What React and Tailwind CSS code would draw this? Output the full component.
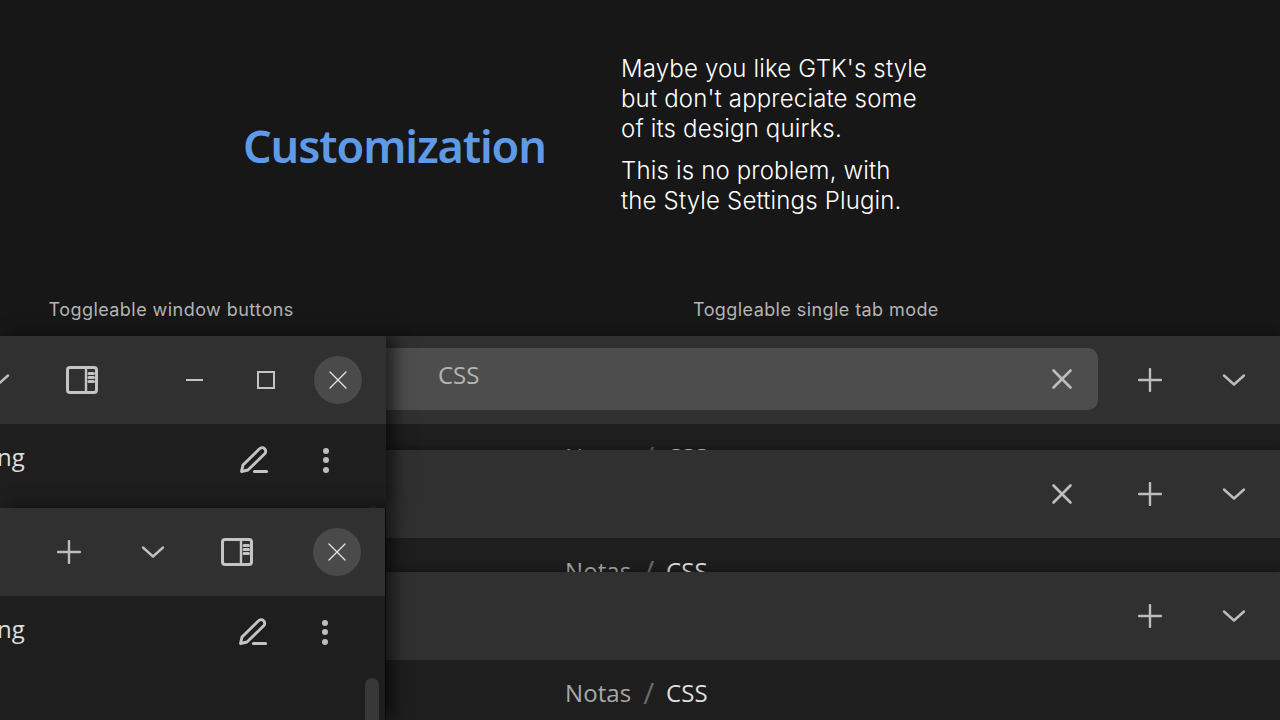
const sansUi = "[font-family:'Open_Sans','Noto_Sans',sans-serif]";

function Plus({ className = "" }) {
  return (
    <svg viewBox="0 0 24 24" className={`h-6 w-6 ${className}`} fill="none" stroke="#bdbdbd" strokeWidth="2.4" strokeLinecap="round">
      <path d="M12 1v22M1 12h22" />
    </svg>
  );
}
function Chevron() {
  return (
    <svg viewBox="0 0 24 24" className="h-6 w-6" fill="none" stroke="#bdbdbd" strokeWidth="2.4" strokeLinecap="round" strokeLinejoin="round">
      <path d="M2 7.5l10 9 10-9" />
    </svg>
  );
}
function Cross() {
  return (
    <svg viewBox="0 0 24 24" className="h-6 w-6" fill="none" stroke="#bdbdbd" strokeWidth="2.6" strokeLinecap="round">
      <path d="M3.5 3.5l17 17M20.5 3.5l-17 17" />
    </svg>
  );
}
function ThinCross() {
  return (
    <svg viewBox="0 0 24 24" className="h-6 w-6" fill="none" stroke="#e0e0e0" strokeWidth="1.4" strokeLinecap="round">
      <path d="M4 4l16 16M20 4L4 20" />
    </svg>
  );
}
function Sidebar() {
  return (
    <svg viewBox="0 0 32 28" className="h-[28px] w-[32px]" fill="none" stroke="#c4c4c4">
      <rect x="1.5" y="1.5" width="29" height="25" rx="2.5" strokeWidth="3" />
      <path d="M20 1v26" strokeWidth="2.4" />
      <path d="M23 7.5h4.5M23 11.5h4.5M23 15.5h4.5" strokeWidth="3" strokeLinecap="round" />
    </svg>
  );
}
function Pencil() {
  return (
    <svg viewBox="0 0 30 28" className="h-[28px] w-[30px]" fill="none" stroke="#c4c4c4" strokeWidth="2.9" strokeLinecap="round" strokeLinejoin="round">
      <path d="M2.5 25.5L4 19 20.5 2.8A3.6 3.6 0 0 1 25.7 7.8L9 24z" />
      <path d="M15.5 25.5h12" strokeWidth="3.2" />
    </svg>
  );
}
function Dots() {
  return (
    <div className="flex flex-col gap-[3.5px]">
      <span className="block h-[6px] w-[6px] rounded-full bg-[#bdbdbd]" />
      <span className="block h-[6px] w-[6px] rounded-full bg-[#bdbdbd]" />
      <span className="block h-[6px] w-[6px] rounded-full bg-[#bdbdbd]" />
    </div>
  );
}
function CloseCircle() {
  return (
    <div className="flex h-12 w-12 items-center justify-center rounded-full bg-[#4a4a4a]">
      <ThinCross />
    </div>
  );
}
function Crumb() {
  return (
    <div className={`mt-[16px] flex h-[34px] items-center pl-[179px] text-[24px] leading-[34px] tracking-[0.1px] ${sansUi}`}>
      <span className="text-[#a9a9a9]">Notas</span>
      <span className="mr-[11.5px] ml-[12px] text-[30px] leading-none text-[#6a6a6a]">/</span>
      <span className="text-[#dedede]">CSS</span>
    </div>
  );
}
function RightHeader({ children }) {
  return (
    <div className="flex h-[88px] items-center bg-[#303030]">
      <div className="flex-1 self-stretch">{children}</div>
      <div className="flex w-[84px] justify-center pr-[8px]"><Plus /></div>
      <div className="flex w-[84px] justify-center pr-[8px]"><Chevron /></div>
    </div>
  );
}
function RightWindow({ children, h, z }) {
  return (
    <div className={`overflow-hidden bg-[#1e1e1e] shadow-[0_0_10px_rgba(0,0,0,0.45)] ${h} ${z} relative`}>
      {children}
      <Crumb />
    </div>
  );
}
function LeftBody() {
  return (
    <div className="flex h-[84px] items-center justify-between bg-[#1e1e1e] pb-[12px]">
      <span className={`-mt-[6px] -ml-[3px] text-[24px] leading-none text-[#dcdcdc] ${sansUi}`}>ng</span>
      <div className="mr-[57px] flex items-center gap-[54px]">
        <Pencil />
        <Dots />
      </div>
    </div>
  );
}

export default function App() {
  return (
    <div className="relative h-[720px] w-[1280px] overflow-hidden bg-[#171717] font-['Inter',sans-serif]">
      <div className="flex h-[298px] pl-[243px] pt-[54px]">
        <h1 className="mt-[64px] w-[378px] shrink-0 font-['Noto_Sans',sans-serif] text-[45px] leading-[56px] font-semibold tracking-[-1.1px] whitespace-nowrap text-[#5d9be8]">
          Customization
        </h1>
        <div className="text-[24px] leading-[30px] font-light tracking-[0.16px] text-white">
          <p>Maybe you like GTK's style<br />but don't appreciate some<br />of its design quirks.</p>
          <p className="mt-[12px]">This is no problem, with<br />the Style Settings Plugin.</p>
        </div>
      </div>

      <div className="flex h-[38px] items-start text-[18px] leading-[24px] tracking-[0.45px] text-[#b4b4b4]">
        <span className="w-[693px] pl-[48.5px]">Toggleable window buttons</span>
        <span className="tracking-[0.42px]">Toggleable single tab mode</span>
      </div>

      <div className="ml-[386px]">
        <RightWindow h="h-[114px]" z="z-0">
          <RightHeader>
            <div className="flex h-full items-start pt-[12px] pr-[14px]">
              <div className="flex h-[62px] flex-1 items-center justify-between rounded-r-[10px] bg-[#4d4d4d] pr-[24px] pl-[52px]">
                <span className={`-mt-[8px] text-[24px] text-[#b4b4b4] ${sansUi}`}>CSS</span>
                <Cross />
              </div>
            </div>
          </RightHeader>
        </RightWindow>
        <RightWindow h="h-[122px]" z="z-10">
          <RightHeader>
            <div className="flex h-full items-center justify-end pr-[38px]"><Cross /></div>
          </RightHeader>
        </RightWindow>
        <RightWindow h="h-[148px]" z="z-20">
          <RightHeader />
        </RightWindow>
      </div>

      <div className="absolute top-[336px] left-0 z-30 w-[386px] shadow-[8px_0_16px_rgba(0,0,0,0.6)]">
        <div className="relative flex h-[88px] items-center bg-[#303030]">
          <div className="absolute top-[32px] -left-[14px]"><Chevron /></div>
          <div className="ml-[66px]"><Sidebar /></div>
          <div className="ml-[88px] h-[2px] w-[17px] bg-[#c4c4c4]" />
          <div className="ml-[54px] h-[18px] w-[18px] border-2 border-[#c4c4c4]" />
          <div className="ml-[39px]"><CloseCircle /></div>
        </div>
        <LeftBody />
        <div className="absolute top-[170px] right-[6px] h-[40px] w-[14px] rounded-full bg-[#2c2c2c]" />
      </div>
      <div className="absolute top-[508px] left-0 z-40 h-[212px] w-[385px] overflow-hidden bg-[#1e1e1e] shadow-[8px_0_16px_rgba(0,0,0,0.6)]">
        <div className="flex h-[88px] items-center justify-end bg-[#303030] pr-[24px]">
          <Plus />
          <div className="ml-[60px]"><Chevron /></div>
          <div className="mr-[60px] ml-[56px]"><Sidebar /></div>
          <CloseCircle />
        </div>
        <LeftBody />
        <div className="absolute top-[170px] right-[6px] h-[60px] w-[14px] rounded-full bg-[#383838]" />
      </div>
    </div>
  );
}
